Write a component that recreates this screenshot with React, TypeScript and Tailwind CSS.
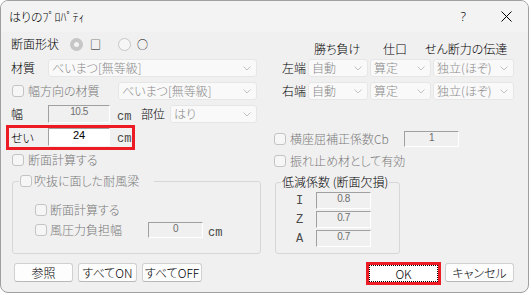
import React from 'react';

const mono = "font-['Liberation_Mono',monospace] text-[#4a4a4a]";

function Chevron() {
  return (
    <svg width="8" height="5" viewBox="0 0 8 5" className="shrink-0">
      <path d="M0.5 0.5L4 4L7.5 0.5" fill="none" stroke="#c2c2c2" strokeWidth="1" />
    </svg>
  );
}

function Select({ className, text }: { className: string; text: string }) {
  return (
    <div
      className={`flex h-[18px] shrink-0 items-center justify-between rounded-[3px] border border-[#e6e6e6] bg-[#f9f9f9] pl-[3px] pr-[5px] text-[#8a8a8a] ${className}`}
    >
      <span className="whitespace-nowrap">{text}</span>
      <Chevron />
    </div>
  );
}

function Check({ className = '' }: { className?: string }) {
  return (
    <span
      className={`block h-[12px] w-[12px] shrink-0 rounded-[3px] border border-[#c4c4c4] bg-[#f6f6f6] ${className}`}
    />
  );
}

function Field({ className, value, active = false }: { className: string; value: string; active?: boolean }) {
  return (
    <div
      className={`flex shrink-0 justify-center border border-t-[#a0a0a0] border-l-[#a0a0a0] border-r-white border-b-white pt-[1px] font-['Liberation_Sans',sans-serif] ${
        active ? 'bg-white text-[11px] text-black' : 'text-[10px] tracking-[-0.5px] text-[#6d6d6d]'
      } ${className}`}
    >
      {value}
    </div>
  );
}

function Button({ className, label }: { className: string; label: string }) {
  return (
    <div
      className={`flex h-[19px] items-center justify-center rounded-[3px] border border-[#d0d0d0] border-b-[#b8b8b8] bg-[#fdfdfd] ${className}`}
    >
      {label}
    </div>
  );
}

export default function App() {
  return (
    <div className="h-[295px] w-[531px] bg-white font-['Noto_Sans_CJK_JP','Noto_Sans',sans-serif] text-[12px] font-light leading-none text-black [font-feature-settings:'palt']">
      <div className="flex h-[293px] w-[529px] flex-col overflow-hidden rounded-[8px] border border-[#9f9f9f] bg-[#f0f0f0]">
        {/* Title bar */}
        <div className="flex h-[31px] shrink-0 items-center bg-[#f3f3f3]">
          <span className="ml-[8px]">はりのﾌﾟﾛﾊﾟﾃｨ</span>
          <span className="ml-auto font-['Noto_Sans',sans-serif] text-[13px]">?</span>
          <svg width="11" height="11" viewBox="0 0 11 11" className="ml-[35px] mr-[16px]">
            <path d="M0.5 0.5L10.5 10.5M10.5 0.5L0.5 10.5" stroke="#000" strokeWidth="1" />
          </svg>
        </div>

        <div className="flex">
          {/* Left column */}
          <div className="ml-[10px] flex w-[250px] flex-col">
            <div className="mt-[4px] flex h-[16px] items-center">
              <span className="w-[59px]">断面形状</span>
              <span className="flex h-[13px] w-[13px] items-center justify-center rounded-full bg-[#c6c6c6]">
                <span className="h-[5px] w-[5px] rounded-full bg-[#f3f3f3]" />
              </span>
              <span className="ml-[7px] w-[28px] text-[11px]">□</span>
              <span className="h-[13px] w-[13px] rounded-full border border-[#c6c6c6] bg-[#f6f6f6]" />
              <span className="ml-[6px] text-[11px]">○</span>
            </div>

            <div className="mt-[7px] flex h-[18px] items-center">
              <span className="w-[37px]">材質</span>
              <Select className="w-[209px]" text="べいまつ[無等級]" />
            </div>

            <div className="mt-[5px] flex h-[18px] items-center">
              <div className="flex w-[107px] items-center">
                <Check className="ml-[1px]" />
                <span className="ml-[4px] text-[#7a7a7a]">幅方向の材質</span>
              </div>
              <Select className="w-[139px]" text="べいまつ[無等級]" />
            </div>

            <div className="mt-[5px] flex h-[18px] items-start">
              <span className="w-[37px] self-center">幅</span>
              <Field className="h-[18px] w-[62px]" value="10.5" />
              <span className={`ml-[7px] mt-[6px] w-[24px] ${mono}`}>cm</span>
              <span className="w-[29px] self-center">部位</span>
              <Select className="w-[87px]" text="はり" />
            </div>

            <div className="-ml-[5px] mt-[2px] flex h-[25px] w-[129px] items-start border-[3px] border-[#ed1c24] pl-[2px]">
              <span className="w-[37px] self-center">せい</span>
              <Field className="h-[18px] w-[62px]" value="24" active />
              <span className={`ml-[7px] mt-[5px] ${mono}`}>cm</span>
            </div>

            <div className="mt-[4px] flex h-[12px] items-center">
              <Check className="ml-[1px]" />
              <span className="ml-[4px] text-[#7a7a7a]">断面計算する</span>
            </div>

            <fieldset className="ml-[1px] mt-[8px] h-[80px] w-[249px] rounded-[3px] border border-[#d7d7d7]">
              <legend className="ml-[6px] flex h-[14px] items-center pl-[1px] pr-[15px]">
                <Check />
                <span className="ml-[2px] text-[#7a7a7a]">吹抜に面した耐風梁</span>
              </legend>
              <div className="ml-[22px] mt-[16px] flex h-[12px] items-center">
                <Check />
                <span className="ml-[3px] text-[#7a7a7a]">断面計算する</span>
              </div>
              <div className="ml-[22px] mt-[6px] flex h-[16px] items-start">
                <Check className="mt-[2px]" />
                <span className="ml-[3px] mt-[2px] w-[98px] text-[#7a7a7a]">風圧力負担幅</span>
                <Field className="h-[16px] w-[55px]" value="0" />
                <span className={`ml-[5px] mt-[5px] ${mono}`}>cm</span>
              </div>
            </fieldset>
          </div>

          {/* Right column */}
          <div className="ml-[9px] flex w-[245px] flex-col">
            <div className="mt-[10px] flex h-[14px] items-center">
              <span className="ml-[44px] w-[69px]">勝ち負け</span>
              <span className="w-[42px]">仕口</span>
              <span>せん断力の伝達</span>
            </div>

            <div className="mt-[3px] flex h-[18px] items-center">
              <span className="ml-[12px] w-[26px]">左端</span>
              <Select className="w-[60px]" text="自動" />
              <Select className="ml-[2px] w-[61px]" text="算定" />
              <Select className="ml-[2px] w-[81px]" text="独立(ほぞ)" />
            </div>

            <div className="mt-[5px] flex h-[18px] items-center">
              <span className="ml-[12px] w-[26px]">右端</span>
              <Select className="w-[60px]" text="自動" />
              <Select className="ml-[2px] w-[61px]" text="算定" />
              <Select className="ml-[2px] w-[81px]" text="独立(ほぞ)" />
            </div>

            <div className="mt-[31px] flex h-[16px] items-center">
              <div className="flex w-[134px] items-center">
                <Check className="ml-[4px]" />
                <span className="ml-[4px] text-[#7a7a7a]">横座屈補正係数Cb</span>
              </div>
              <Field className="h-[16px] w-[55px]" value="1" />
            </div>

            <div className="mt-[8px] flex h-[12px] items-center">
              <Check className="ml-[4px]" />
              <span className="ml-[4px] text-[#7a7a7a]">振れ止め材として有効</span>
            </div>

            <fieldset className="ml-[5px] mt-[8px] h-[79px] w-[125px] rounded-[3px] border border-[#d7d7d7]">
              <legend className="ml-[5px] flex h-[14px] items-center px-[1px]">低減係数 (断面欠損)</legend>
              <div className="mt-[3px] flex flex-col gap-[2px]">
                {[
                  ['I', '0.8'],
                  ['Z', '0.7'],
                  ['A', '0.7'],
                ].map(([k, v]) => (
                  <div key={k} className="flex h-[17px] items-center">
                    <span className={`ml-[20px] w-[20px] ${mono}`}>{k}</span>
                    <Field className="h-[17px] w-[55px]" value={v} />
                  </div>
                ))}
              </div>
            </fieldset>
          </div>
        </div>

        {/* Buttons */}
        <div className="mt-[8px] flex h-[23px] items-start">
          <div className="ml-[13px] mt-[1px] flex gap-[5px]">
            <Button className="w-[59px]" label="参照" />
            <Button className="w-[59px]" label="すべてON" />
            <Button className="w-[60px]" label="すべてOFF" />
          </div>
          <div className="ml-auto mr-[14px] flex items-start">
            <div className="h-[23px] w-[75px] border-[3px] border-[#ed1c24]">
              <div className="flex h-full w-full items-center justify-center border border-dotted border-black bg-white">
                OK
              </div>
            </div>
            <Button className="ml-[4px] mt-[1px] w-[69px]" label="キャンセル" />
          </div>
        </div>
      </div>
    </div>
  );
}
